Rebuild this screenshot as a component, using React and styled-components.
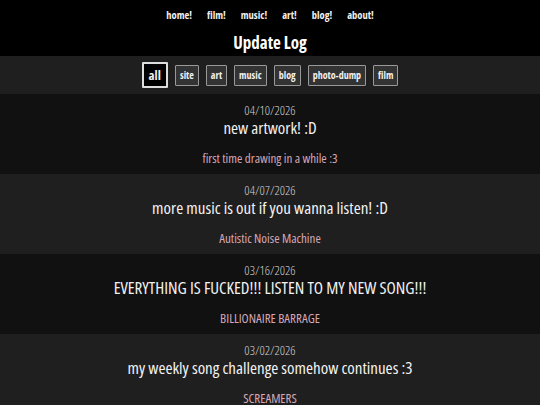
import React from "react";
import styled, { createGlobalStyle } from "styled-components";

const Global = createGlobalStyle`
  html, body { margin: 0; padding: 0; background: #000; }
  body {
    font-family: "Open Sans", "Roboto", sans-serif;
    font-stretch: condensed;
    color: #eee;
  }
`;

const Page = styled.div`
  width: 540px;
  background: #000;
`;

const Nav = styled.nav`
  display: flex;
  justify-content: center;
  gap: 15px;
  padding-top: 7px;
  height: 15px;
  align-items: center;
`;

const NavLink = styled.a`
  color: #f0f0f0;
  font-weight: bold;
  font-size: 10.5px;
  text-decoration: none;
`;

const Title = styled.h1`
  margin: 0;
  padding-top: 11px;
  height: 34px;
  box-sizing: border-box;
  text-align: center;
  font-size: 17px;
  line-height: 20px;
  font-weight: bold;
  color: #fff;
`;

const FilterBar = styled.div`
  background: #1f1f1f;
  height: 38px;
  display: flex;
  justify-content: center;
  align-items: center;
  gap: 7px;
`;

const FilterButton = styled.button`
  font-family: inherit;
  font-stretch: condensed;
  font-weight: bold;
  color: #f0f0f0;
  background: ${(p) => (p.$active ? "#000" : "#333")};
  border: ${(p) => (p.$active ? "2px solid #ddd" : "1px solid #999")};
  font-size: ${(p) => (p.$active ? "13px" : "10px")};
  height: ${(p) => (p.$active ? "26px" : "21px")};
  padding: 0 ${(p) => (p.$active ? "5px" : "4px")};
  border-radius: 1px;
  cursor: pointer;
`;

const Entry = styled.div`
  background: ${(p) => (p.$alt ? "#1f1f1f" : "#111")};
  padding: 8px 0;
  text-align: center;
  height: 80px;
  box-sizing: border-box;
`;

const Date = styled.div`
  font-size: 13px;
  line-height: 16px;
  font-weight: 300;
  color: #d0d0d0;
`;

const EntryTitle = styled.div`
  font-size: 17px;
  line-height: 20px;
  color: #f2f2f2;
`;

const Sub = styled.a`
  display: block;
  margin-top: 12px;
  font-size: 13px;
  line-height: 16px;
  color: #d6a7b6;
  text-decoration: none;
`;

const navItems = ["home!", "film!", "music!", "art!", "blog!", "about!"];
const filters = ["all", "site", "art", "music", "blog", "photo-dump", "film"];
const entries = [
  { date: "04/10/2026", title: "new artwork! :D", sub: "first time drawing in a while :3" },
  { date: "04/07/2026", title: "more music is out if you wanna listen! :D", sub: "Autistic Noise Machine" },
  { date: "03/16/2026", title: "EVERYTHING IS FUCKED!!! LISTEN TO MY NEW SONG!!!", sub: "BILLIONAIRE BARRAGE" },
  { date: "03/02/2026", title: "my weekly song challenge somehow continues :3", sub: "SCREAMERS" },
];

export default function App() {
  return (
    <Page>
      <Global />
      <Nav>
        {navItems.map((n) => (
          <NavLink key={n} href="#">{n}</NavLink>
        ))}
      </Nav>
      <Title>Update Log</Title>
      <FilterBar>
        {filters.map((f, i) => (
          <FilterButton key={f} $active={i === 0}>{f}</FilterButton>
        ))}
      </FilterBar>
      {entries.map((e, i) => (
        <Entry key={e.date} $alt={i % 2 === 1}>
          <Date>{e.date}</Date>
          <EntryTitle>{e.title}</EntryTitle>
          <Sub href="#">{e.sub}</Sub>
        </Entry>
      ))}
    </Page>
  );
}
